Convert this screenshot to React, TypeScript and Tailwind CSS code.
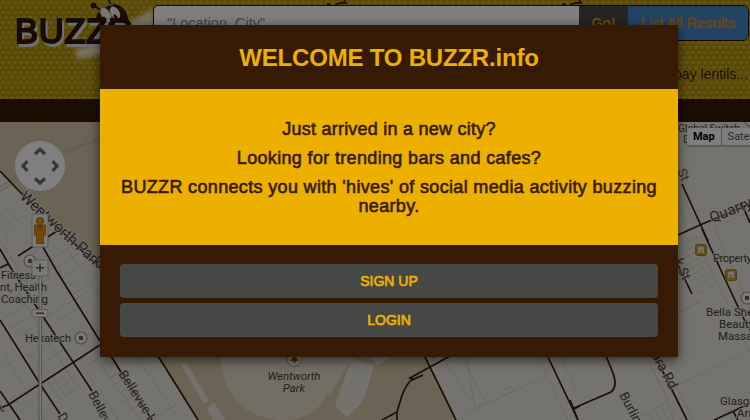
import React from 'react';

const HONEY_ROAD = '#38200a';

const roads = [
  'M0 171 L20 192 L100 268',
  'M0 249 L12 270 L40 312 L73 362 L92 391',
  'M43 247 L56 270 L100 341',
  'M18 256 L57 231',
  'M0 268 L8 264',
  'M0 320 L40 384 L60 414',
  'M0 391 L20 420',
  'M0 408 L8 405 L100 345',
  'M111 356 L124 377 L152 420',
  'M158 356 L198 420',
  'M424 355 L456 420',
  'M450 356 L410 378 L414 379 L423 375 L410 381 Q403 390 400 402 L397 412 L397 420 M397 412 L382 420',
  'M547 355 L578 420 M574 409 L580 406',
  'M606 356 L613 373 Q618 387 611 392 L574 408',
  'M570 400 L578 420',
  'M655 356 L687 420',
  'M682 184 L708 241',
  'M678 235 L700 225 L750 204',
  'M741 202 L750 223',
  'M702 229 L724 277 L742 315 L750 331',
  'M678 265 L692 294',
  'M714 420 L736 410 L750 403 M733 411 L738 420',
];

const parcels = [
  'M0 205 L38 238 M0 214 L14 228 M20 213 L50 240 L32 254 M0 226 L12 243 M60 238 L100 296 M72 246 L48 262 M80 252 L54 270 M88 260 L60 279 M92 270 L66 288 M97 278 L72 295',
  'M0 240 L28 284 L18 291 L70 375 M30 280 L55 266 M34 287 L62 270 M50 315 L84 294 M54 323 L90 302 M4 318 L30 301 M10 328 L38 311 M16 338 L44 321 M22 347 L50 331 M28 357 L56 340 M36 368 L62 351',
  'M44 375 L62 363 L78 387 L60 400 Z M50 385 L68 373 M54 392 L72 380 M52 375 L66 397 M58 371 L73 392 M4 354 L26 390 M10 400 L40 382 M0 370 L16 360 M20 412 L34 402 L46 420 M84 367 L100 357 M84 367 L96 386',
  'M100 363 L140 420 M102 370 L118 360 M108 379 L124 370 M112 386 L130 376 M118 394 L134 385 M122 402 L140 393 M128 411 L146 402 M136 356 L176 415 M150 420 L176 405 M100 390 L118 420',
  'M442 357 L475 407 L486 402 L462 357 M475 407 L466 357 M465 414 L547 376 M500 392 L511 386 L513 391 L502 396 Z M538 357 L568 420 M560 357 L577 392',
  'M646 357 L676 416 M640 417 L666 402 L674 420 M648 412 L653 420 M654 409 L660 420 M660 406 L668 420 M670 389 L715 368 L750 350 M676 386 L692 420 M744 340 L750 352',
  'M678 248 L696 237 L728 305 M680 254 L698 244 M682 259 L702 249 M685 265 L705 255 M687 270 L707 260 M689 276 L709 266 M691 281 L712 271 M694 288 L714 278 M696 294 L716 284 M694 304 L698 301 M678 313 L700 302',
  'M678 200 L685 220 L678 224 M714 228 L750 211 M714 228 L726 254 M692 239 L697 236 M730 262 L750 308',
];

function Poi({ x, y, r = 6 }: { x: number; y: number; r?: number }) {
  return (
    <g>
      <circle cx={x} cy={y} r={r} fill="#f6f3ec" stroke="#a09c94" strokeWidth="1.2" />
      <rect x={x - 2} y={y - 2} width="4" height="4" fill="#7a6526" />
    </g>
  );
}

function Bus({ x, y }: { x: number; y: number }) {
  return (
    <g>
      <rect x={x - 5.5} y={y - 5.5} width="11" height="11" rx="2" fill="#c69b2f" stroke="#a87d1e" />
      <path d={`M${x - 3} ${y + 2} v-4 q0 -1.5 1.5 -1.5 h3 q1.5 0 1.5 1.5 v4 z M${x - 3} ${y + 2} h1.5 v1.5 h-1.5 z M${x + 1.5} ${y + 2} h1.5 v1.5 h-1.5 z`} fill="#eee7d4" />
      <path d={`M${x - 2} ${y + 0.5} h4`} stroke="#c69b2f" strokeWidth="0.8" />
    </g>
  );
}

function StreetMap() {
  return (
    <svg className="block h-[298px] w-[750px] font-[Roboto,sans-serif]" viewBox="0 122 750 298">
      <rect y="122" width="750" height="298" fill="#e9e6df" />
      <path d="M0 122 H100 V266 L20 192 L0 171 Z" fill="#d6c9a9" />
      <path d="M158 356 H425 L456 420 H198 Z" fill="#d6c9a9" />
      <path d="M221 350 C220 390 240 418 280 420 H288 C308 418 322 408 327 393 L330 395 L353 356 V350 Z" fill="#e4ddc7" />
      <g fill="#e9e5db">
        <path d="M181 365 L186 362 L209 401 L204 404 Z M207 408 L214 402 L225 420 H213 Z" />
        <path d="M352 358 L374 366 L363 401 L347 418 L335 405 Z M370 357 L377 365 L391 357 Z" />
      </g>
      <path d="M0 187 Q25 170 50 158 Q75 144 100 141 M0 191 Q25 174 52 160 Q77 147 100 138" fill="none" stroke="#b9b3a6" strokeWidth="1" />
      <g fill="none" stroke="#d5d1c8" strokeWidth="1">
        {parcels.map((d) => <path key={d} d={d} />)}
      </g>
      <g fill="none" stroke={HONEY_ROAD} strokeWidth="1.7">
        {roads.map((d) => <path key={d} d={d} />)}
      </g>

      <g fill="#4b453d" stroke="#ebe8e1" strokeOpacity="0.75" strokeWidth="2" paintOrder="stroke" fontSize="13">
        <text transform="translate(19 198) rotate(42)" fontSize="15.500" textLength="105">Wentworth Park</text>
        <text transform="translate(88 394) rotate(62)">Bellevue</text>
        <text transform="translate(118 374) rotate(57)" textLength="66">Bellevue Ln</text>
        <text transform="translate(57 416) rotate(60)">Da</text>
        <text transform="translate(-5 417) rotate(-32)">ot</text>
        <text transform="translate(651 355) rotate(62)" fontSize="14">ara Rd</text>
        <text transform="translate(619 395) rotate(62)" fontSize="13">Burlin</text>
        <text transform="translate(712 223) rotate(-22)" fontSize="15">Quarry</text>
        <text transform="translate(674 261) rotate(66)">k St</text>
        <text transform="translate(677 171) rotate(66)" fill="#756125">St</text>
      </g>

      <g fill="#45413b" stroke="#ebe8e1" strokeOpacity="0.8" strokeWidth="2" paintOrder="stroke" fontSize="11.5">
        <text x="1" y="279" textLength="35">Fitness</text>
        <text x="0" y="291" textLength="47">nt, Health</text>
        <text x="1" y="303" textLength="47">Coaching</text>
        <text x="25" y="342" textLength="46">Hexatech</text>
        <text x="678" y="132" textLength="62" fontSize="10.500">Global Switch</text>
        <text x="683" y="143" fontSize="11">D</text>
        <text x="713" y="262" textLength="39">Property</text>
        <text x="706" y="316">Bella She</text>
        <text x="719" y="328">Beauty</text>
        <text x="718" y="340">Massa</text>
        <text x="720" y="405">Glasgo</text>
        <text x="737" y="417">Arn</text>
        <g fontStyle="italic" textAnchor="middle" stroke="#e6dfcb">
          <text x="294" y="380" textLength="53">Wentworth</text>
          <text x="294" y="392">Park</text>
        </g>
      </g>

      <path d="M430 356 q3 2 5 0" fill="none" stroke="#45413b" strokeWidth="1.500" />

      <Poi x={30} y={261} />
      <Poi x={81} y={338} />
      <Poi x={747} y={298} />
      <path d="M745 122 Q748 129 755 124" fill="none" stroke="#8a857d" />
      <circle cx="294.500" cy="359" r="7.500" fill="#f3eddc" stroke="#a09c94" />
      <path d="M294.500 353 l3 4 h-1.500 l3 4 h-3.500 v2 h-2 v-2 h-3.500 l3 -4 h-1.500 z" fill="#84651b" />
      <Bus x={701} y={250} />
      <Bus x={731} y={275} />

      {/* Pan, street view and zoom controls */}
      <circle cx="40" cy="166.500" r="25.500" fill="#cfcbc2" />
      <circle cx="40" cy="166" r="25" fill="#fff" />
      <path d="M35 154 L40 149.500 L45 154 M35 178.500 L40 183 L45 178.500 M27.500 161 L23 166 L27.500 171 M52.500 161 L57 166 L52.500 171" fill="none" stroke="#6c6c6c" strokeWidth="3.200" />
      <rect x="39" y="276" width="2.500" height="144" fill="#f3f2ef" stroke="#9c9992" strokeWidth="0.800" />
      <g fill="#f4f3f0" stroke="#aaa69f" strokeWidth="0.800">
        <rect x="32" y="214" width="16" height="33" rx="1" />
        <rect x="32" y="260" width="16" height="16" rx="1" />
        <rect x="32" y="309.500" width="16" height="7.500" rx="1" />
      </g>
      <path d="M36 267.700 h8 M40 263.700 v8 M36 313.200 h8" stroke="#555" strokeWidth="1.600" />
      <path d="M34.500 225 h11 v10 h-2 v8.500 h-7 v-8.500 h-2 z" fill="#dd980d" stroke="#a46b06" strokeWidth="0.800" />
      <path d="M37 225.500 h6 l-3 4 z" fill="#c95a46" />
      <circle cx="40" cy="221" r="3.700" fill="#df990e" stroke="#a46b06" strokeWidth="0.800" />
    </svg>
  );
}

function HoneycombArt() {
  return (
    <svg className="absolute inset-0 h-full w-full font-['Liberation_Sans',Arial,sans-serif]" viewBox="0 0 750 99">
      <defs>
        <pattern id="comb" width="6" height="10" patternUnits="userSpaceOnUse">
          <rect width="6" height="10" fill="#b0900c" />
          <g fill="#caa823">
            <ellipse cx="3" cy="2.500" rx="2.300" ry="2.100" />
            <ellipse cx="0" cy="7.500" rx="2.300" ry="2.100" />
            <ellipse cx="6" cy="7.500" rx="2.300" ry="2.100" />
          </g>
        </pattern>
        <filter id="soft"><feGaussianBlur stdDeviation="2.500" /></filter>
      </defs>
      <rect width="750" height="99" fill="url(#comb)" />
      <g fill="#efe8c9" filter="url(#soft)">
        <path d="M76 49 Q88 46 104 44 L104 52 Q88 58 77 59 Z" />
        <path d="M126 23 Q140 17 153 9 V30 H126 Z" />
      </g>
      <g stroke="#2a1708" strokeWidth="1.800" fill="#38200d">
        <path d="M102 11 L94 5.500 M111 5 L109 0" />
        <circle cx="93.500" cy="5.500" r="2" />
        <circle cx="112" cy="20" r="15" />
      </g>
      <path d="M99 13 Q104 4 113 4.500" fill="none" stroke="#a88a62" strokeWidth="2" />
      <ellipse cx="106" cy="15" rx="4.500" ry="8" transform="rotate(-30 106 15)" fill="#f0eee8" />
      <ellipse cx="115" cy="13" rx="4.500" ry="7" transform="rotate(-28 115 13)" fill="#f0eee8" />
      <path d="M103 17 l2 3 M114 15 l3 3" stroke="#241309" strokeWidth="2.500" />
      <text
        x="15"
        y="42.500"
        fontSize="34.500"
        textLength="118"
        fill="#321608"
        stroke="#321608"
        strokeWidth="2"
        className="[filter:drop-shadow(2.5px_3px_0_#dedee4)]"
      >
        BUZZR
      </text>
      <path d="M327 4 l4 1 M345 0 l-1 3 M335 5 q5 -3 12 -2 M562 4 l4 1 M580 0 l-1 3 M570 5 q5 -3 12 -2" fill="none" stroke="#3d240b" strokeWidth="2" />
    </svg>
  );
}

function Header() {
  return (
    <header className="relative h-[99px] w-full overflow-hidden pt-[5px]">
      <HoneycombArt />
      <div className="relative ml-[153px] flex h-9 w-[596px] overflow-hidden rounded-md border border-[#2a1506] text-[14px] leading-[35px]">
        <div className="w-[425px] bg-white pl-[13px] text-[14.500px] text-[#858585]">&quot;Location, City&quot;</div>
        <div className="w-[49px] bg-[#464846] text-center font-bold text-[#d9980c]">Go!</div>
        <div className="flex-1 whitespace-nowrap bg-[#4686cb] text-center text-[14.500px] text-[#c99330] [-webkit-text-stroke:0.700px_#c99330]">List All Results</div>
      </div>
      <p className="relative mt-[23px] pr-[2px] text-right text-[14px] leading-5 text-[#38200a]">pay lentils...</p>
    </header>
  );
}

function MapTypeSwitch() {
  return (
    <div className="absolute left-[687px] top-[128px] flex h-[17px] w-[80px] bg-white font-['Roboto'] text-[11px] leading-[18px] shadow-[0_1px_2px_rgba(0,0,0,0.4)]">
      <span className="w-[35px] border-r border-[#aaa] text-center font-bold text-black">Map</span>
      <span className="pl-[6px] text-[#555]">Satellite</span>
    </div>
  );
}

function WelcomeModal() {
  return (
    <section className="absolute left-[100px] top-[25px] w-[578px] bg-[#361a04] text-center shadow-[0_3px_11px_rgba(0,0,0,0.65)]">
      <h1 className="h-16 text-[24px] font-bold leading-[65px] tracking-[-0.200px] text-[#edb000]">WELCOME TO BUZZR.info</h1>
      <div className="flex h-[156px] flex-col gap-[10px] bg-[#edb000] px-5 pt-[31px] text-[18px] leading-[19px] tracking-[0.340px] text-[#361a04] [-webkit-text-stroke:0.600px_#361a04]">
        <p className="tracking-[0.240px]">Just arrived in a new city?</p>
        <p>Looking for trending bars and cafes?</p>
        <p>BUZZR connects you with &#39;hives&#39; of social media activity buzzing nearby.</p>
      </div>
      <div className="flex flex-col gap-[5px] px-5 pb-5 pt-[19px] text-[14px] leading-[34px] text-[#edb000] [-webkit-text-stroke:0.700px_#edb000]">
        <button className="h-[34px] rounded bg-[#464846]">SIGN UP</button>
        <button className="h-[34px] rounded bg-[#464846]">LOGIN</button>
      </div>
    </section>
  );
}

export default function App() {
  return (
    <main className="relative h-[420px] w-[750px] overflow-hidden font-['Liberation_Sans',Arial,sans-serif]">
      <Header />
      <div className="h-[23px] bg-[#361a04]" />
      <StreetMap />
      <MapTypeSwitch />
      <div className="absolute inset-0 bg-black/50" />
      <WelcomeModal />
    </main>
  );
}
